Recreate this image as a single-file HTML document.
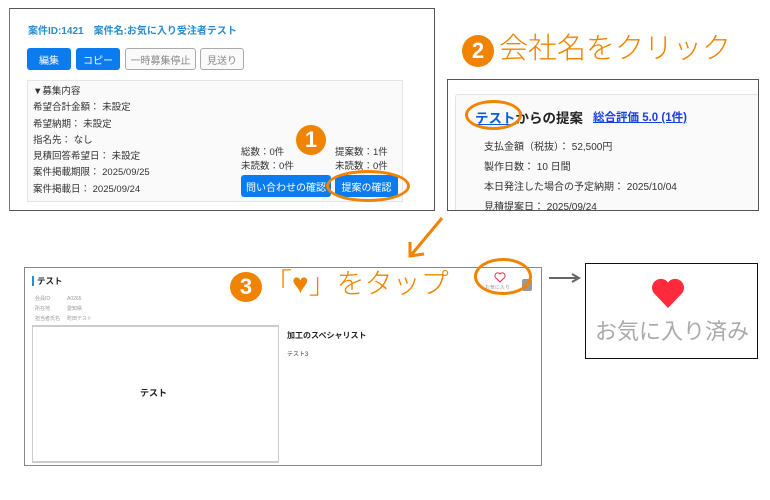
<!DOCTYPE html>
<html><head><meta charset="utf-8"><style>
*{margin:0;padding:0;box-sizing:border-box}
body{width:770px;height:500px;background:#fff;position:relative;overflow:hidden;font-family:"Liberation Sans","Noto Sans CJK JP",sans-serif;color:#222}
.a{position:absolute;white-space:nowrap}
.btn{position:absolute;height:22px;border-radius:3px;font-size:10px;display:flex;align-items:center;justify-content:center}
.bl{background:#0a7cf0;color:#fff}
.gr{background:#fafafa;border:1px solid #aaa;color:#888}
.or{color:#f08300}
.num{position:absolute;border-radius:50%;background:#f08300;color:#fff;font-weight:bold;display:flex;align-items:center;justify-content:center}
</style></head><body>
<!-- panel 1 -->
<div class="a" style="left:9px;top:8px;width:426px;height:203px;border:1px solid #555;border-left-color:#777"></div>
<div class="a" style="left:28px;top:22px;font-size:10px;font-weight:bold;color:#2a8ccc">案件ID:1421　案件名:お気に入り受注者テスト</div>
<div class="btn bl" style="left:27px;top:48px;width:44px">編集</div>
<div class="btn bl" style="left:76px;top:48px;width:44px">コピー</div>
<div class="btn gr" style="left:125px;top:48px;width:71px">一時募集停止</div>
<div class="btn gr" style="left:200px;top:48px;width:44px">見送り</div>
<div class="a" style="left:27px;top:80px;width:376px;height:122px;border:1px solid #e4e4e4;background:#fafafa"></div>
<div class="a" style="left:33px;top:84px;font-size:9.5px;line-height:16.3px;color:#333">▼募集内容<br>希望合計金額： 未設定<br>希望納期： 未設定<br>指名先： なし<br>見積回答希望日： 未設定<br>案件掲載期限： 2025/09/25<br>案件掲載日： 2025/09/24</div>
<div class="a" style="left:241px;top:146px;font-size:9.5px;line-height:14px;color:#333">総数：0件<br>未読数：0件</div>
<div class="a" style="left:335px;top:146px;font-size:9.5px;line-height:14px;color:#333">提案数：1件<br>未読数：0件</div>
<div class="btn bl" style="left:241px;top:175px;width:90px">問い合わせの確認</div>
<div class="btn bl" style="left:335px;top:175px;width:63px">提案の確認</div>
<div class="a" style="left:326px;top:170px;width:84px;height:32px;border:3px solid #f08300;border-radius:50%"></div>
<div class="num" style="left:296px;top:125px;width:30px;height:30px;font-size:22px">1</div>
<!-- panel 2 -->
<div class="num" style="left:462px;top:35px;width:32px;height:32px;font-size:22px">2</div>
<div class="a or" style="left:499px;top:29px;font-size:29px;line-height:40px;font-weight:300">会社名をクリック</div>
<div class="a" style="left:447px;top:79px;width:312px;height:132px;border:1px solid #555;overflow:hidden">
 <div class="a" style="left:7px;top:14px;width:320px;height:130px;border:1px solid #e4e4e4;background:#fafafa;border-radius:3px"></div>
 <div class="a" style="left:27px;top:27px;font-size:13.5px;font-weight:bold"><span style="color:#0a5ce0;text-decoration:underline">テスト</span>からの提案</div>
 <div class="a" style="left:145px;top:29px;font-size:11.5px;font-weight:bold;color:#1a3fe0;text-decoration:underline">総合評価 5.0 (1件)</div>
 <div class="a" style="left:36px;top:58px;font-size:10px;line-height:20px;color:#333">支払金額（税抜）： 52,500円<br>製作日数： 10 日間<br>本日発注した場合の予定納期： 2025/10/04<br>見積提案日： 2025/09/24</div>
</div>
<div class="a" style="left:465px;top:100px;width:57px;height:30px;border:3px solid #f08300;border-radius:50%"></div>
<!-- arrow -->
<svg class="a" style="left:400px;top:210px" width="50" height="52"><path d="M42 8 L12 44 M10 32 L10 46 L24 44" stroke="#f08300" stroke-width="3" fill="none"/></svg>
<!-- panel 3 -->
<div class="a" style="left:24px;top:267px;width:518px;height:199px;border:1px solid #888"></div>
<div class="a" style="left:32px;top:276px;width:2px;height:10px;background:#2a8ccc"></div>
<div class="a" style="left:37px;top:275px;font-size:8.5px;font-weight:bold">テスト</div>
<div class="a" style="left:35px;top:294px;font-size:5px;line-height:10px;color:#999">会員ID<br>所在地<br>担当者氏名</div>
<div class="a" style="left:67px;top:294px;font-size:5px;line-height:10px;color:#999">A0265<br>愛知県<br>町田テスト</div>
<div class="a" style="left:32px;top:325px;width:247px;height:138px;border:1px solid #ccc;border-top:2px solid #ccc;border-bottom:2px solid #ccc"></div>
<div class="a" style="left:140px;top:386px;font-size:9px;font-weight:bold">テスト</div>
<div class="a" style="left:287px;top:330px;font-size:8px;font-weight:bold">加工のスペシャリスト</div>
<div class="a" style="left:287px;top:349px;font-size:6px;color:#444">テスト3</div>
<svg class="a" style="left:494px;top:272px" width="12" height="11" viewBox="0 0 24 22"><path d="M12 20 L3 11 A5 5 0 0 1 12 4 A5 5 0 0 1 21 11 Z" fill="none" stroke="#e0304a" stroke-width="2"/></svg>
<div class="a" style="left:485px;top:284px;font-size:5px;color:#999">お気に入り</div>
<div class="a" style="left:522px;top:279px;width:10px;height:12px;background:#999;border-radius:2px"></div>
<div class="a" style="left:474px;top:258px;width:58px;height:37px;border:3px solid #f08300;border-radius:50%"></div>
<div class="num" style="left:230px;top:272px;width:32px;height:30px;font-size:22px">3</div>
<div class="a or" style="left:264px;top:264px;font-size:28px;line-height:40px;font-weight:300">「♥」をタップ</div>
<!-- gray arrow -->
<svg class="a" style="left:548px;top:272px" width="34" height="12"><path d="M1 6 H30 M24 2 L31 6 L24 10" stroke="#666" stroke-width="2" fill="none"/></svg>
<div class="a" style="left:585px;top:263px;width:173px;height:96px;border:1px solid #111"></div>
<svg class="a" style="left:650px;top:276px" width="36" height="34" viewBox="0 0 24 22"><path d="M12 21 L2.5 11 A5.3 5.3 0 0 1 12 4 A5.3 5.3 0 0 1 21.5 11 Z" fill="#ff2a3c"/></svg>
<div class="a" style="left:595px;top:314px;font-size:22px;color:#aaa">お気に入り済み</div>
</body></html>
